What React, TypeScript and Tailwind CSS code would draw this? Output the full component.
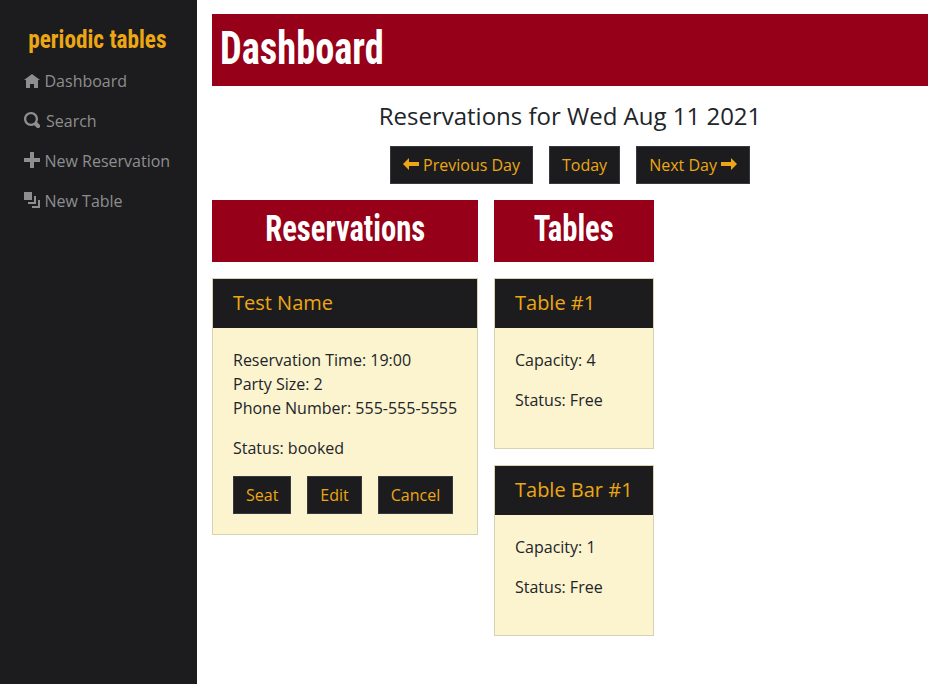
import React from "react";

const icons = {
  home: "M4 1l-4 3h1v4h2v-2h2v2h2v-4.03l1 .03-4-3z",
  search:
    "M3.5 0c-1.93 0-3.5 1.57-3.5 3.5s1.57 3.5 3.5 3.5c.59 0 1.17-.14 1.66-.41a1 1 0 0 0 .13.13l1 1a1.02 1.02 0 1 0 1.44-1.44l-1-1a1 1 0 0 0-.16-.13c.27-.49.44-1.06.44-1.66 0-1.93-1.55-3.5-3.5-3.5zm0 1.15c1.3 0 2.35 1.05 2.35 2.35 0 .62-.23 1.19-.62 1.61l-.16.16c-.41.37-.97.58-1.57.58-1.3 0-2.35-1.05-2.35-2.35s1.05-2.35 2.35-2.35z",
  plus: "M3 0v3h-3v2h3v3h2v-3h3v-2h-3v-3h-2z",
  layers: "M0 0v4h4v-4h-4zm5 2v3h-3v1h4v-4h-1zm2 2v3h-3v1h4v-4h-1z",
  left: "M3 1l-3 3.03 3 2.97v-2h5v-2h-5v-2z",
  right: "M5 1v2h-5v2h5v2l3-2.97-3-3.03z",
};

function Icon({ name }: { name: keyof typeof icons }) {
  return (
    <svg viewBox="0 0 8 8" className="-mt-0.5 size-4 shrink-0" fill="currentColor">
      <path d={icons[name]} />
    </svg>
  );
}

function Display({ children, className }: { children: React.ReactNode; className: string }) {
  return (
    <span
      className={`block whitespace-nowrap font-bold [font-stretch:75%] font-[Roboto,'Liberation_Sans',sans-serif] ${className}`}
    >
      {children}
    </span>
  );
}

function NavItem({ icon, label, gap = "gap-[4.5px]" }: { icon: keyof typeof icons; label: string; gap?: string }) {
  return (
    <a className={`flex h-10 items-center text-[#8e8e8f] ${gap}`}>
      <Icon name={icon} />
      <span className="whitespace-nowrap">{label}</span>
    </a>
  );
}

function Button({ children }: { children: React.ReactNode }) {
  return (
    <button className="flex h-[38px] items-center gap-1 whitespace-nowrap border border-[#343a40] bg-[#1c1c1e] px-3 text-[#eca714]">
      {children}
    </button>
  );
}

function SectionTitle({ children }: { children: React.ReactNode }) {
  return (
    <h2 className="flex h-[62px] items-center justify-center bg-[#960018] pb-1 text-white">
      <Display className="scale-x-[0.84] text-[36.5px] leading-none">{children}</Display>
    </h2>
  );
}

function Card({ title, className, children }: { title: string; className: string; children: React.ReactNode }) {
  return (
    <section className={`mt-4 border border-[#d9d2b0] bg-[#fcf3cf] text-[#212529] ${className}`}>
      <h5 className="flex h-[49px] items-center bg-[#1c1c1e] px-5 pb-0.5 text-xl font-normal text-[#eca714]">{title}</h5>
      <div className="whitespace-nowrap px-5 pt-5">{children}</div>
    </section>
  );
}

export default function App() {
  return (
    <div className="flex h-[698px] w-[943px] overflow-hidden bg-white font-['Open_Sans',sans-serif] text-base leading-6">
      <aside className="h-[684px] w-[197px] shrink-0 bg-[#1c1c1e] px-6">
        <div className="flex h-[61px] justify-center pt-6">
          <Display className="-ml-0.5 scale-x-[0.93] text-[25px] leading-8 text-[#eca714]">periodic tables</Display>
        </div>
        <nav>
          <NavItem icon="home" label="Dashboard" />
          <NavItem icon="search" label="Search" gap="gap-1.5" />
          <NavItem icon="plus" label="New Reservation" />
          <NavItem icon="layers" label="New Table" />
        </nav>
      </aside>
      <main className="ml-[15px] mt-[14px] w-[716px]">
        <h1 className="flex h-[72px] items-center bg-[#960018] px-2 pb-1 text-white">
          <Display className="origin-left scale-x-[0.835] text-[46px] leading-none">Dashboard</Display>
        </h1>
        <h4 className="mt-[15px] text-center text-2xl font-normal leading-[29px] text-[#212529]">
          Reservations for Wed Aug 11 2021
        </h4>
        <div className="mt-4 flex justify-center gap-4">
          <Button>
            <Icon name="left" />
            Previous Day
          </Button>
          <Button>Today</Button>
          <Button>
            Next Day
            <Icon name="right" />
          </Button>
        </div>
        <div className="mt-4 flex items-start gap-4">
          <div className="w-[266px]">
            <SectionTitle>Reservations</SectionTitle>
            <Card title="Test Name" className="h-[257px]">
              <p>Reservation Time: 19:00</p>
              <p>Party Size: 2</p>
              <p>Phone Number: 555-555-5555</p>
              <p className="mt-4">Status: booked</p>
              <div className="mt-4 flex gap-4">
                <Button>Seat</Button>
                <Button>Edit</Button>
                <Button>Cancel</Button>
              </div>
            </Card>
          </div>
          <div className="w-[160px]">
            <SectionTitle>Tables</SectionTitle>
            <Card title="Table #1" className="h-[171px]">
              <p>Capacity: 4</p>
              <p className="mt-4">Status: Free</p>
            </Card>
            <Card title="Table Bar #1" className="h-[171px]">
              <p>Capacity: 1</p>
              <p className="mt-4">Status: Free</p>
            </Card>
          </div>
        </div>
      </main>
    </div>
  );
}
